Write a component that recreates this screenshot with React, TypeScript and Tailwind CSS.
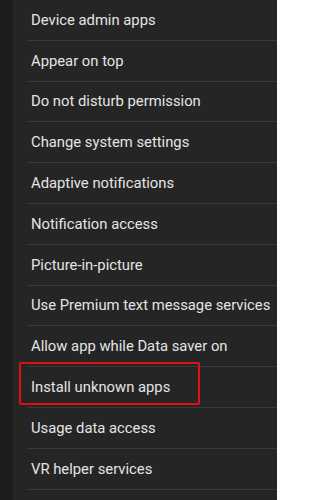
const items = [
  "Device admin apps",
  "Appear on top",
  "Do not disturb permission",
  "Change system settings",
  "Adaptive notifications",
  "Notification access",
  "Picture-in-picture",
  "Use Premium text message services",
  "Allow app while Data saver on",
  "Install unknown apps",
  "Usage data access",
  "VR helper services",
];

const App = () => {
  return (
    <div className="flex h-[500px] w-[277px] overflow-hidden bg-[#1c1c1c] font-['Roboto',sans-serif]">
      <div className="w-[13px] shrink-0 bg-[#1c1c1c]" />
      <div className="flex-1 bg-[#252525] pl-[14px]">
        <ul>
          {items.map((label) => (
            <li
              key={label}
              className="relative flex h-[40.8px] items-center border-b border-[#3a3a3a] pl-[4px] whitespace-nowrap text-[14.8px] text-[#e4e4e4]"
            >
              {label}
              {label === "Install unknown apps" && (
                <span className="absolute -left-[8px] top-[-5px] h-[43px] w-[181px] rounded-[2px] border-2 border-[#e01010]" />
              )}
            </li>
          ))}
        </ul>
      </div>
    </div>
  );
};

export default App;
